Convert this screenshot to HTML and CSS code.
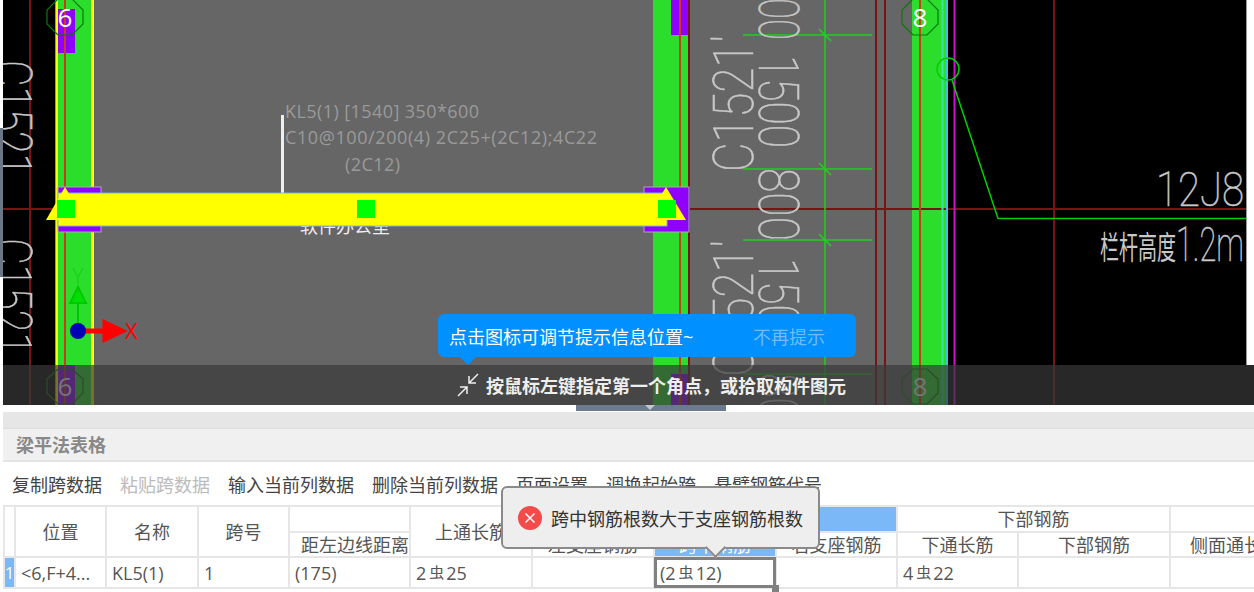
FILE: index.html
```html
<!DOCTYPE html>
<html lang="zh">
<head>
<meta charset="utf-8">
<title>梁平法表格</title>
<link rel="stylesheet" href="styles.css">
</head>
<body>
<div class="page">
  <section class="canvas">
    <svg class="drawing" width="1254" height="405" viewBox="0 0 1254 405">
      <rect class="bg-black" x="3" y="0" width="1251" height="405"/>
      <rect class="bg-gray" x="93" y="0" width="820" height="405"/>
      <rect class="col-green" x="55" y="0" width="39" height="405"/>
      <rect class="col-green" x="653" y="0" width="36" height="405"/>
      <rect class="col-green" x="912" y="0" width="36" height="405"/>
      <rect class="col-yellow" x="56" y="0" width="2" height="405"/>
      <rect class="col-yellow" x="91" y="0" width="3" height="405"/>
      <rect class="col-purple" x="58" y="9" width="17" height="44"/>
      <rect class="col-purple" x="671" y="0" width="17" height="35"/>
      <rect class="col-purple" x="58" y="365" width="17" height="40"/>
      <rect class="col-purple" x="671" y="374" width="17" height="31"/>

      <path class="line-dark" d="M30 0V405M689 0V405M876 0V405M885 0V405M1054 0V405M3 209H1246"/>
      <path class="line-red" d="M65 0V405M680 0V405M920 0V405"/>
      <path class="line-cyan" d="M947 0V405"/>
      <path class="line-mint" d="M942.500 0V405"/>
      <path class="line-magenta" d="M954.500 0V405"/>

      <path class="line-green" d="M743 35H872M743 169H872M743 240H872M825 0V405M819 29L831 41M819 163L831 175M819 234L831 246M743 374H872"/>
      <circle class="line-callout" cx="948" cy="69" r="11"/>
      <path class="line-callout" d="M952 80L998 218.500H1246"/>

      <path class="octagon" d="M58 -1L72 -1L83 10L83 24L72 35L58 35L47 24L47 10Z"/>
      <path class="octagon" d="M913 -1L927 -1L938 10L938 24L927 35L913 35L902 24L902 10Z"/>
      <path class="octagon" d="M58 369L72 369L83 379L83 393L72 404L58 404L47 393L47 379Z"/>
      <path class="octagon" d="M913 369L927 369L938 379L938 393L927 404L913 404L902 393L902 379Z"/>
      <text class="axis-num" x="65" y="27">6</text>
      <text class="axis-num" x="920" y="27">8</text>
      <text class="axis-num" x="65" y="396">6</text>
      <text class="axis-num" x="920" y="396">8</text>

      <text class="cad" transform="translate(-8 60) rotate(90)" textLength="116" lengthAdjust="spacingAndGlyphs">C1521</text>
      <text class="cad" transform="translate(-8 238) rotate(90)" textLength="117" lengthAdjust="spacingAndGlyphs">C1521</text>
      <text class="cad" transform="translate(753 172) rotate(-90)" textLength="137" lengthAdjust="spacingAndGlyphs">C1521′</text>
      <text class="cad" transform="translate(753 377) rotate(-90)" textLength="137" lengthAdjust="spacingAndGlyphs">C1521′</text>
      <text class="cad" transform="translate(759 -2) rotate(90)" textLength="42" lengthAdjust="spacingAndGlyphs">00</text>
      <text class="cad" transform="translate(759 55) rotate(90)" textLength="93" lengthAdjust="spacingAndGlyphs">1500</text>
      <text class="cad" transform="translate(759 168) rotate(90)" textLength="73" lengthAdjust="spacingAndGlyphs">800</text>
      <text class="cad" transform="translate(759 258) rotate(90)" textLength="93" lengthAdjust="spacingAndGlyphs">1500</text>
      <text class="cad" transform="translate(759 373) rotate(90)" textLength="73" lengthAdjust="spacingAndGlyphs">800</text>
      <text class="cad cad-h" x="1156" y="206" textLength="88" lengthAdjust="spacingAndGlyphs">12J8</text>
      <text class="cad-cjk" x="1100" y="259" textLength="76" lengthAdjust="spacingAndGlyphs">栏杆高度</text>
      <text class="cad cad-h" x="1176" y="261" textLength="68" lengthAdjust="spacingAndGlyphs">1.2m</text>

      <text class="beam-label" x="285" y="118" textLength="194">KL5(1) [1540] 350*600</text>
      <text class="beam-label" x="285" y="144" textLength="312">C10@100/200(4) 2C25+(2C12);4C22</text>
      <text class="beam-label" x="345" y="171" textLength="55">(2C12)</text>
      <rect class="leader" x="281" y="115" width="3" height="78"/>
      <text class="room" x="300" y="233">软件办公室</text>

      <rect class="support" x="58" y="187" width="43" height="45"/>
      <rect class="support" x="644" y="187" width="45" height="45"/>
      <rect class="beam" x="58" y="193" width="609" height="33"/>
      <path class="col-yellow" d="M65 187L85 220H46Z"/>
      <path class="col-yellow" d="M666 187L686 220H646Z"/>
      <rect class="grip" x="57" y="200" width="18" height="18"/>
      <rect class="grip" x="357" y="200" width="18" height="18"/>
      <rect class="grip" x="658" y="200" width="18" height="18"/>

      <path class="axis-y" d="M78 323V302M78 287L86 303H70Z"/>
      <path class="axis-y-mark" d="M73 268L78 277L83 268M78 277V284"/>
      <path class="axis-x" d="M84 331H106M122 331L105 323V339Z"/>
      <circle class="axis-o" cx="78" cy="331" r="8"/>
      <text class="axis-x-text" x="125" y="339">X</text>
    </svg>
    <div class="edge-left"></div>
    <div class="edge-right"></div>
    <div class="hint">
      <span class="hint-text">点击图标可调节提示信息位置~</span>
      <span class="hint-dismiss">不再提示</span>
    </div>
    <div class="status">
      <svg class="status-icon" width="24" height="24" viewBox="0 0 24 24">
        <path d="M22 1L13 10M13 3V10H20M2 23L11 14M4 14H11V21"/>
      </svg>
      <span>按鼠标左键指定第一个角点，或拾取构件图元</span>
    </div>
  </section>

  <div class="splitter"><div class="handle"></div></div>

  <section class="panel">
    <div class="strip"></div>
    <h2 class="title">梁平法表格</h2>
    <div class="toolbar">
      <span>复制跨数据</span>
      <span class="disabled">粘贴跨数据</span>
      <span>输入当前列数据</span>
      <span>删除当前列数据</span>
      <span>页面设置</span>
      <span>调换起始跨</span>
      <span>悬臂钢筋代号</span>
    </div>
    <table class="grid">
      <colgroup>
        <col class="c-idx"><col class="c-sm"><col class="c-sm2"><col class="c-sm">
        <col class="c-md"><col class="c-lg"><col class="c-lg"><col class="c-lg">
        <col class="c-md"><col class="c-md"><col class="c-xl"><col class="c-md">
      </colgroup>
      <thead>
        <tr class="r1">
          <th rowspan="2"></th>
          <th rowspan="2">位置</th>
          <th rowspan="2">名称</th>
          <th rowspan="2">跨号</th>
          <th></th>
          <th rowspan="2">上通长筋</th>
          <th colspan="3" class="active">上部钢筋</th>
          <th colspan="2">下部钢筋</th>
          <th></th>
        </tr>
        <tr class="r2">
          <th class="nudge">距左边线距离</th>
          <th>左支座钢筋</th>
          <th class="active">跨中钢筋</th>
          <th>右支座钢筋</th>
          <th>下通长筋</th>
          <th>下部钢筋</th>
          <th class="nudge">侧面通长筋</th>
        </tr>
      </thead>
      <tbody>
        <tr class="r3">
          <td class="idx">1</td>
          <td>&lt;6,F+4...</td>
          <td>KL5(1)</td>
          <td>1</td>
          <td>(175)</td>
          <td>2<span class="rebar">虫</span>25</td>
          <td></td>
          <td class="selected">(2<span class="rebar">虫</span>12)</td>
          <td></td>
          <td>4<span class="rebar">虫</span>22</td>
          <td></td>
          <td></td>
        </tr>
      </tbody>
    </table>
    <div class="toast">
      <svg class="toast-icon" width="24" height="24" viewBox="0 0 24 24">
        <circle cx="12" cy="12" r="12"/>
        <path d="M7.500 7.500L16.500 16.500M16.500 7.500L7.500 16.500"/>
      </svg>
      <span>跨中钢筋根数大于支座钢筋根数</span>
    </div>
  </section>
</div>
</body>
</html>
```

FILE: styles.css
```css
* { box-sizing: border-box; }
html, body { margin: 0; padding: 0; height: 100%; overflow: hidden; background: #fff; }
body { font-family: "Open Sans", "Noto Sans CJK SC", sans-serif; font-size: 18px; }
.page { width: 1254px; height: 592px; overflow: hidden; }

.canvas { position: relative; height: 405px; overflow: hidden; }
.drawing { display: block; }
.drawing text { font-family: "Open Sans", "Noto Sans CJK SC", sans-serif; }
.bg-black { fill: #000; }
.bg-gray { fill: #666; }
.col-green { fill: #2bde2b; }
.col-yellow { fill: #ff0; }
.col-purple { fill: #8f00ff; }
.line-dark { stroke: #7a1414; stroke-width: 2; fill: none; }
.line-red { stroke: #c83c1c; stroke-width: 2; fill: none; }
.line-cyan { stroke: #3cc4e0; stroke-width: 2; fill: none; }
.line-mint { stroke: #3ce6a0; stroke-width: 2; fill: none; }
.line-magenta { stroke: #d010d0; stroke-width: 2; fill: none; }
.line-green { stroke: #1fd01f; stroke-width: 1.5; fill: none; }
.line-callout { stroke: #00d000; stroke-width: 1.5; fill: none; }
.octagon { fill: none; stroke: #0a780a; stroke-width: 1.2; }
.drawing .axis-num { fill: #fff; font-size: 26px; text-anchor: middle; }
.drawing .cad { fill: #c8c8c8; stroke: #c8c8c8; stroke-width: .6px; font-family: "Roboto", "Lato", sans-serif; font-weight: 100; font-size: 56px; }
.drawing .cad-h { font-size: 48px; }
.drawing .cad-cjk { fill: #c8c8c8; font-family: "Noto Sans CJK SC", sans-serif; font-size: 32px; }
.drawing .beam-label { fill: #9a9a9a; font-size: 18px; }
.drawing .room { fill: #eee; font-size: 18px; }
.leader { fill: #eee; }
.support { fill: #8f00ff; stroke: #aaa; stroke-width: 1; }
.beam { fill: #ff0; stroke: #7fb0e0; stroke-width: 1; }
.grip { fill: #0f0; }
.axis-y { stroke: #00c800; fill: #00e000; stroke-width: 2; }
.axis-y-mark { stroke: #1fd01f; fill: none; stroke-width: 1.5; }
.axis-x { stroke: #f00; fill: #f00; stroke-width: 5; stroke-linejoin: miter; }
.axis-o { fill: #0000b4; }
.drawing .axis-x-text { fill: #f00; font-size: 22px; }

.edge-left { position: absolute; left: 0; top: 0; width: 3px; height: 405px; background: linear-gradient(#fff 0 128px, #6b7785 128px 277px, #fff 277px); }
.edge-right { position: absolute; right: 0; top: 0; width: 8px; height: 365px; background: #fff; border-left: 1px solid #999; }

.hint { position: absolute; left: 438px; top: 314px; width: 418px; height: 43px; padding-left: 11px; display: flex; align-items: center; background: #0090ff; border-radius: 6px; color: #fff; z-index: 2; }
.hint::after { content: ""; position: absolute; left: 22px; top: 43px; border: 8px solid transparent; border-top-color: #0090ff; border-bottom-width: 0; }
.hint-text { width: 304px; }
.hint-dismiss { color: #70bcff; }

.status { position: absolute; left: 3px; right: 0; top: 365px; height: 40px; padding-left: 453px; display: flex; align-items: center; gap: 6px; background: rgba(57, 57, 57, .7); color: #eee; font-weight: 700; }
.status-icon { flex: none; }
.status-icon path { fill: none; stroke: #eee; stroke-width: 1.5; }

.splitter { height: 7px; }
.handle { position: relative; width: 150px; height: 6px; margin-left: 576px; background: #6b7a8c; }
.handle::after { content: ""; position: absolute; left: 69px; top: 0; border: 5px solid transparent; border-top-color: #c4c8ce; border-bottom-width: 0; }

.panel { position: relative; margin-left: 3px; height: 180px; }
.strip { height: 17px; background: #e6e6e6; border-bottom: 1px solid #ddd; }
.title { margin: 0; height: 33px; padding-left: 13px; background: #f0f0f0; border-bottom: 2px solid #e4e4e4; color: #888; font-size: 18px; font-weight: 700; line-height: 33px; }
.toolbar { height: 43px; padding-left: 9px; display: flex; align-items: center; gap: 18px; color: #444; }
.disabled { color: #bbb; }

.grid { border-collapse: collapse; table-layout: fixed; width: 1286px; color: #555; font-size: 18px; line-height: 20px; }
.grid th, .grid td { border: 2px solid #e6e6e6; padding: 0 5px; white-space: nowrap; overflow: hidden; }
.grid th { font-weight: 400; text-align: center; }
.grid .nudge { padding-left: 11px; padding-right: 2px; }
.c-idx { width: 11px; }
.c-sm { width: 91px; }
.c-sm2 { width: 92px; }
.c-md { width: 121px; }
.c-lg { width: 122px; }
.c-xl { width: 152px; }
.r1 { height: 26px; }
.r2 { height: 25px; }
.r3 { height: 31px; }
.grid .active { background: #7ab8f8; color: #fff; }
.grid .idx { padding: 0; background: #7ab8f8; color: #fff; text-align: center; font-size: 16px; }
.grid .selected { position: relative; overflow: visible; }
.selected::before { content: ""; position: absolute; inset: -1px; border: 3px solid #808080; }
.selected::after { content: ""; position: absolute; right: -4px; bottom: -5px; width: 7px; height: 7px; background: #808080; }
.rebar { display: inline-block; margin: 0 2px 0 3px; font-size: 15px; line-height: 15px; vertical-align: 2px; }

.toast { position: absolute; left: 498px; top: 74px; width: 319px; height: 63px; padding-left: 15px; display: flex; align-items: center; gap: 9px; background: #eee; border: 2px solid #8a8a8a; border-radius: 6px; color: #333; }
.toast::after { content: ""; position: absolute; left: 205px; bottom: -8px; width: 13px; height: 13px; background: #eee; border-right: 2px solid #8a8a8a; border-bottom: 2px solid #8a8a8a; transform: rotate(45deg); }
.toast-icon { flex: none; }
.toast-icon circle { fill: #f44a4a; }
.toast-icon path { stroke: #fff; stroke-width: 1.5; fill: none; }
```
